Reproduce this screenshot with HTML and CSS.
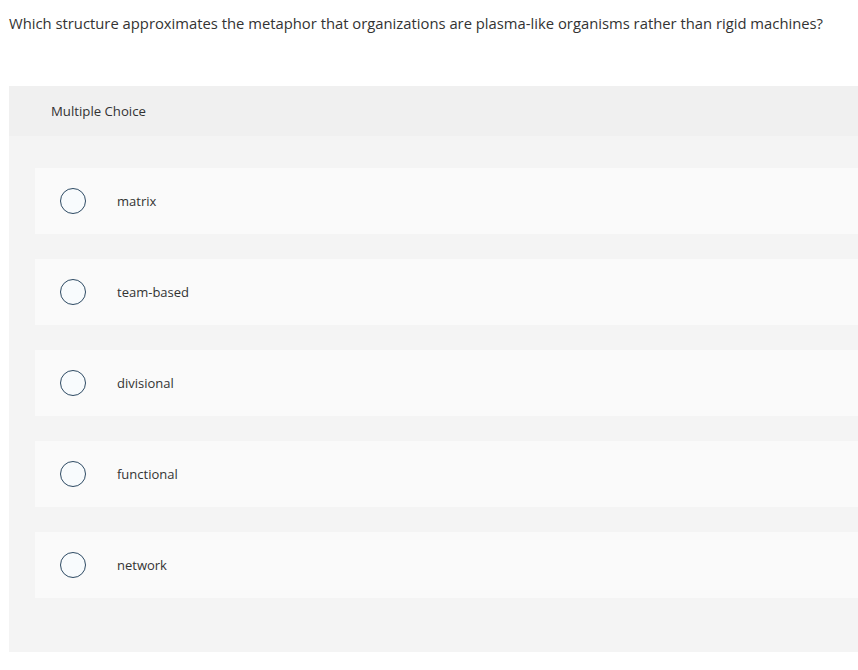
FILE: index.html
```html
<!DOCTYPE html>
<html>
<head>
<meta charset="utf-8">
<link rel="stylesheet" href="styles.css">
</head>
<body>
<p class="question">Which structure approximates the metaphor that organizations are plasma-like organisms rather than rigid machines?</p>
<section class="panel">
  <div class="panel-head">Multiple Choice</div>
  <div class="panel-body">
    <label class="option"><span class="radio"></span><span class="label">matrix</span></label>
    <label class="option"><span class="radio"></span><span class="label">team-based</span></label>
    <label class="option"><span class="radio"></span><span class="label">divisional</span></label>
    <label class="option"><span class="radio"></span><span class="label">functional</span></label>
    <label class="option"><span class="radio"></span><span class="label">network</span></label>
  </div>
</section>
</body>
</html>
```
FILE: styles.css
```css
html, body {
  margin: 0;
  padding: 0;
  background: #ffffff;
  font-family: "Open Sans", "Liberation Sans", sans-serif;
  color: #333333;
}
.question {
  margin: 0;
  padding: 13px 0 0 9px;
  height: 86px;
  box-sizing: border-box;
  font-size: 14.8px;
  line-height: 20px;
  color: #333;
}
.panel {
  margin-left: 9px;
  background: #f4f4f4;
}
.panel-head {
  height: 50px;
  background: #f0f0f0;
  display: flex;
  align-items: center;
  padding-left: 42px;
  font-size: 13.2px;
  color: #333;
}
.panel-body {
  padding: 32px 0 54px 26px;
  display: flex;
  flex-direction: column;
  gap: 25px;
}
.option {
  height: 66px;
  background: #fafafa;
  display: flex;
  align-items: center;
  padding-left: 25px;
}
.radio {
  width: 24px;
  height: 24px;
  border: 1.5px solid #2d4a63;
  border-radius: 50%;
  background: #f8fbfd;
  flex: none;
}
.label {
  margin-left: 31px;
  font-size: 13px;
  color: #333;
}
```
